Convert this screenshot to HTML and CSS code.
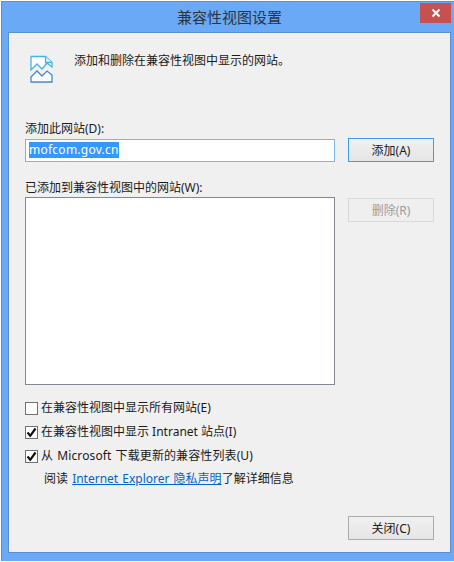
FILE: index.html
```html
<!DOCTYPE html>
<html lang="zh">
<head>
    <meta charset="UTF-8">
    <title>兼容性视图设置</title>
    <meta name="viewport" content="width=device-width, initial-scale=1.0">
    <link rel="stylesheet" href="styles.css">
</head>
<body>
<div class="window">
    <div class="titlebar">
        <h1 class="title">兼容性视图设置</h1>
        <button class="close-x" aria-label="关闭">
            <svg width="10" height="10" viewBox="0 0 10 10"><path d="M1.500 1.500l7 7M8.500 1.500l-7 7" stroke="#fff" stroke-width="2" fill="none"/></svg>
        </button>
    </div>
    <div class="content">
        <div class="intro">
            <svg class="intro-icon" width="24" height="28" viewBox="0 0 24 28">
                <path d="M2 15V1.500H16.500L23 7.500V12L18 8L13 14L8 9Z" fill="#fff" stroke="#45b5e2" stroke-width="1.300"/>
                <path d="M16.500 1.500V7.500H23" fill="#d8eef8" stroke="#45b5e2" stroke-width="1.300"/>
                <path d="M2 22L8 16L13 21L18 16L23 20V27H2Z" fill="#fff" stroke="#4a86c8" stroke-width="1.300"/>
            </svg>
            <p class="intro-text">添加和删除在兼容性视图中显示的网站。</p>
        </div>

        <label class="label">添加此网站(D):</label>
        <div class="row">
            <div class="field"><span class="selected">mofcom.gov.cn</span></div>
            <button class="btn btn-focus">添加(A)</button>
        </div>

        <label class="label label-list">已添加到兼容性视图中的网站(W):</label>
        <div class="row row-list">
            <div class="listbox"></div>
            <button class="btn btn-disabled">删除(R)</button>
        </div>

        <div class="options">
            <div class="option"><span class="check"></span>在兼容性视图中显示所有网站(E)</div>
            <div class="option"><span class="check">
                <svg width="11" height="11" viewBox="0 0 11 11"><path d="M1.500 5.500L4.300 8.800L9.500 1.500" stroke="#111" stroke-width="2.200" fill="none"/></svg>
            </span>在兼容性视图中显示 Intranet 站点(I)</div>
            <div class="option"><span class="check">
                <svg width="11" height="11" viewBox="0 0 11 11"><path d="M1.500 5.500L4.300 8.800L9.500 1.500" stroke="#111" stroke-width="2.200" fill="none"/></svg>
            </span><span class="wide">从 Microsoft 下载更新的兼容性列表(U)</span></div>
        </div>
        <p class="privacy">阅读 <a href="#">Internet Explorer 隐私声明</a>了解详细信息</p>

        <div class="footer">
            <button class="btn">关闭(C)</button>
        </div>
    </div>
</div>
</body>
</html>
```

FILE: styles.css
```css
html, body {
    margin: 0;
    padding: 0;
    background: #fff;
}

body {
    width: 454px;
    height: 562px;
    overflow: hidden;
    font-family: "Noto Sans", "Noto Sans CJK SC", sans-serif;
    font-size: 12px;
    color: #1a1a1a;
}

.window {
    margin: 1px 0 0 1px;
    height: 560px;
    box-sizing: border-box;
    background: #69a9f5;
    border: 1px solid #5c8fd0;
    border-right: none;
    border-bottom: none;
    display: flex;
    flex-direction: column;
    padding: 0 3px 8px 6px;
}

.titlebar {
    height: 30px;
    flex: none;
    display: flex;
    justify-content: center;
    position: relative;
}

.title {
    margin: 0;
    font-size: 15px;
    font-weight: normal;
    line-height: 30px;
    color: #2b3440;
}

.close-x {
    position: absolute;
    top: 1px;
    right: 0;
    width: 31px;
    height: 20px;
    border: none;
    padding: 0;
    background: #c75050;
    display: flex;
    align-items: center;
    justify-content: center;
}

.content {
    flex: 1;
    background: #f0f0f0;
    border: 1px solid #5c8fd0;
    padding: 0 16px 0 16px;
    display: flex;
    flex-direction: column;
}

.intro {
    display: flex;
    height: 87px;
    padding-top: 19px;
    box-sizing: border-box;
}

.intro-icon {
    flex: none;
    margin: 3px 0 0 4px;
}

.intro-text {
    margin: 0 0 0 21px;
    line-height: 17px;
}

.label {
    line-height: 17px;
    height: 17px;
    margin-bottom: 1px;
}

.label-list {
    margin-top: 17px;
    margin-bottom: 1px;
}

.row {
    display: flex;
    justify-content: space-between;
    align-items: center;
}

.row-list {
    align-items: flex-start;
}

.field {
    width: 310px;
    height: 23px;
    box-sizing: border-box;
    border: 1px solid #7eb4ea;
    background: #fff;
    padding: 2px 0 0 3px;
    font-size: 12px;
    letter-spacing: 0.25px;
}

.selected {
    background: #3399ff;
    color: #fff;
    display: block;
    width: fit-content;
    height: 16px;
    line-height: 16px;
}

.listbox {
    width: 310px;
    height: 188px;
    box-sizing: border-box;
    border: 1px solid #828790;
    background: #fff;
}

.btn {
    width: 86px;
    height: 24px;
    box-sizing: border-box;
    border: 1px solid #acacac;
    background: linear-gradient(#f0f0f0, #e5e5e5);
    font: inherit;
    color: #1a1a1a;
    padding: 0;
}

.btn-focus {
    border-color: #3c9cf0;
}

.btn-disabled {
    margin-top: 1px;
    border-color: #d9d9d9;
    background: #efefef;
    color: #9d9d9d;
}

.options {
    margin-top: 14px;
    display: flex;
    flex-direction: column;
    gap: 6px;
}

.option {
    display: flex;
    align-items: center;
    height: 18px;
    line-height: 18px;
}

.wide {
    word-spacing: 1px;
    letter-spacing: 0.1px;
}

.check {
    width: 11px;
    height: 11px;
    flex: none;
    margin-right: 3px;
    border: 1px solid #707070;
    background: #fff;
    display: flex;
}

.privacy {
    margin: 5px 0 0 19px;
    line-height: 18px;
    word-spacing: 1px;
}

.privacy a {
    color: #0066cc;
}

.footer {
    margin-top: auto;
    padding-bottom: 12px;
    display: flex;
    justify-content: flex-end;
}
```
